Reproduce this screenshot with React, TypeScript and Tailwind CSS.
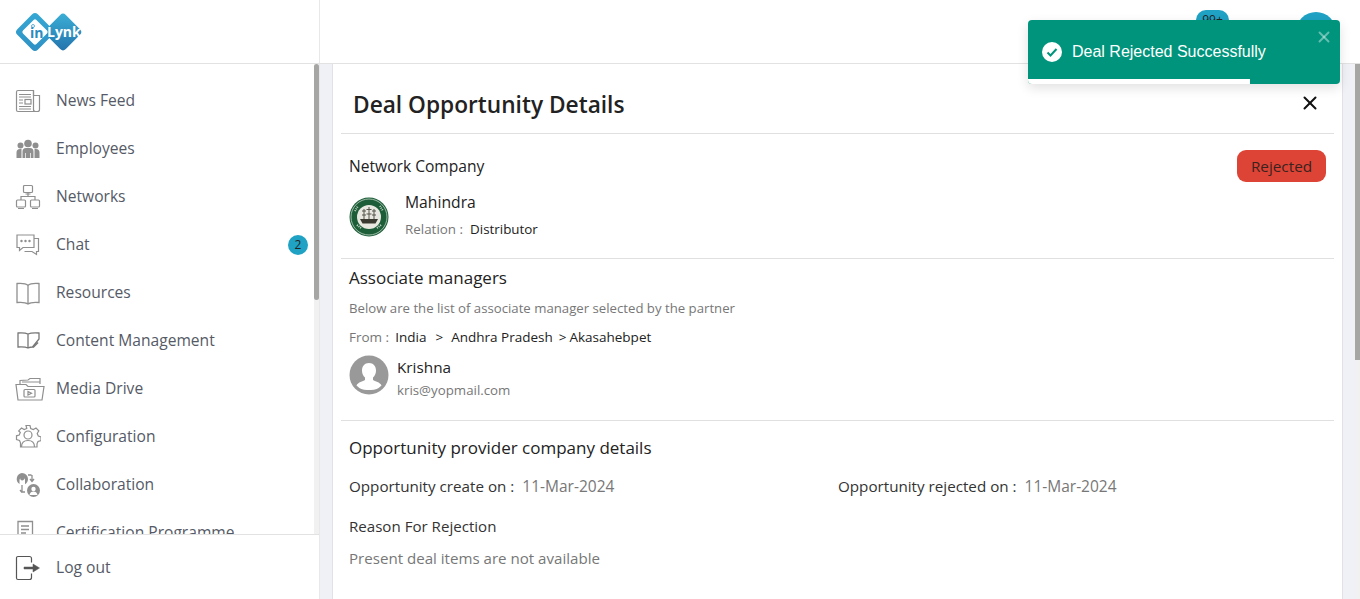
import { X } from 'lucide-react';
import type { ReactNode } from 'react';

const iconClass = 'w-[26px] h-[26px] shrink-0';

const icons: Record<string, ReactNode> = {
  news: (
    <svg viewBox="0 0 26 26" className={iconClass} fill="none" stroke="#8f8f8f" strokeWidth="1.2">
      <path d="M18.5 2.5H3a1.5 1.5 0 0 0-1.5 1.5v18A1.5 1.5 0 0 0 3 23.500h19.500a2 2 0 0 0 2-2V7.500h-6z" />
      <path d="M18.500 2.500v19a2 2 0 0 0 2 2" />
      <path d="M4 6.500h12M4 9h12M4 12h4M4 15h4M4 18.500h12M4 21h12" />
      <rect x="10" y="11.500" width="6" height="4.500" />
    </svg>
  ),
  employees: (
    <svg viewBox="0 0 26 26" className={iconClass} fill="#8f8f8f">
      <circle cx="13" cy="7.500" r="3.800" />
      <circle cx="5.500" cy="9.500" r="3" />
      <circle cx="20.500" cy="9.500" r="3" />
      <path d="M1.500 22v-5.500a3.500 3.500 0 0 1 3.500-3.500h1.500v9zM7.500 22v-6.500a3.500 3.500 0 0 1 3.500-3.500h4a3.500 3.500 0 0 1 3.500 3.500V22h-2.800v-5h-.7v5h-4v-5h-.7v5zM19.500 22v-9H21a3.500 3.500 0 0 1 3.500 3.500V22z" />
    </svg>
  ),
  networks: (
    <svg viewBox="0 0 26 26" className={iconClass} fill="none" stroke="#8f8f8f" strokeWidth="1.200">
      <rect x="8.500" y="1.500" width="9" height="7" rx="1" />
      <rect x="1.500" y="16" width="9" height="7" rx="1" />
      <rect x="15.500" y="16" width="9" height="7" rx="1" />
      <path d="M13 8.500v4M6 16v-3.500h14V16M3 24.500h6M17 24.500h6M10.500 10h5" />
    </svg>
  ),
  chat: (
    <svg viewBox="0 0 26 26" className={iconClass} fill="none" stroke="#8f8f8f" strokeWidth="1.200">
      <path d="M2 3h17v12.500H8L4.500 18.500v-3H2z" />
      <path d="M19 6.500h4.500v13h-2v3l-4.500-3H9.500" />
      <circle cx="6.500" cy="9" r=".6" fill="#8f8f8f" />
      <circle cx="10.500" cy="9" r=".6" fill="#8f8f8f" />
      <circle cx="14.500" cy="9" r=".6" fill="#8f8f8f" />
    </svg>
  ),
  resources: (
    <svg viewBox="0 0 26 26" className={iconClass} fill="none" stroke="#8f8f8f" strokeWidth="1.300">
      <path d="M13 5.500C11 3.500 8 3 2 3.500v19c6-.5 9 0 11 1.500 2-1.500 5-2 11-1.500v-19c-6-.5-9 0-11 2zM13 5.500V24" />
    </svg>
  ),
  content: (
    <svg viewBox="0 0 26 26" className={iconClass} fill="none" stroke="#777" strokeWidth="1.300">
      <path d="M13 6c-2-1-5-1.300-10-1v14c5-.3 8 0 10 1 2-1 3-1 4.500-1L24 11V5c-5-.3-9 0-11 1zM13 6v14" />
      <path d="M18 19.500l5-5" strokeWidth="1.600" />
    </svg>
  ),
  media: (
    <svg viewBox="0 0 30 26" className="w-[30px] h-[26px] shrink-0 -mr-1" fill="none" stroke="#8f8f8f" strokeWidth="1.200">
      <path d="M5 8V4.500l8-.5 2-1.500h10V8M7 6h18" />
      <path d="M1 8.500h10l2 2h16l-2 13.500H3z" />
      <rect x="9" y="13.500" width="11" height="7.500" rx="1" />
      <path d="M13 15.500l3.500 1.700-3.500 1.800z" />
    </svg>
  ),
  config: (
    <svg viewBox="0 0 26 26" className={iconClass} fill="none" stroke="#8f8f8f" strokeWidth="1.200">
      <path d="M11 1.500h4l.7 3 2.600 1.100 2.700-1.500 2.800 2.800-1.600 2.600 1.100 2.500 2.700.8v3.800l-3 .8-1 2.400V23H5.500v-4.200l-1-2.400-3-.8v-3.800l2.700-.8 1.100-2.500L3.700 6.900l2.800-2.800 2.700 1.500 2.600-1.100z" />
      <circle cx="13" cy="11" r="4" />
      <path d="M6.500 23c0-4.500 3-6.500 6.500-6.500s6.500 2 6.500 6.500" />
    </svg>
  ),
  collab: (
    <svg viewBox="0 0 26 26" className={iconClass} fill="#8f8f8f">
      <path d="M7 1a6 6 0 0 1 6 6 6 6 0 0 1-3 5.200V8.500a2.500 2.500 0 1 0-5.500 0V12A6 6 0 0 1 7 1z" />
      <circle cx="7.200" cy="6.500" r="2" />
      <path d="M18.500 12a6.500 6.500 0 0 1 6.500 6.500 6.500 6.500 0 0 1-13 0 6.500 6.500 0 0 1 6.500-6.500z" />
      <circle cx="18.500" cy="17" r="2.200" fill="#fff" />
      <path d="M14.500 23c.5-2.500 2-3.500 4-3.500s3.500 1 4 3.500z" fill="#fff" />
      <path d="M7 13v7h3M5 18l2 2.500M16.500 3H13M17 3v6M15 7l2 2.500 2-2.500" fill="none" stroke="#8f8f8f" strokeWidth="1.300" />
    </svg>
  ),
  cert: (
    <svg viewBox="0 0 26 26" className={iconClass} fill="none" stroke="#8f8f8f" strokeWidth="1.300">
      <path d="M17.500 14V1.500H3v21h10" />
      <path d="M6 6h8M6 9.500h8M6 13h5" />
      <circle cx="18" cy="19" r="4" />
    </svg>
  ),
};

const navItems = [
  { key: 'news', label: 'News Feed' },
  { key: 'employees', label: 'Employees' },
  { key: 'networks', label: 'Networks' },
  { key: 'chat', label: 'Chat', badge: '2' },
  { key: 'resources', label: 'Resources' },
  { key: 'content', label: 'Content Management' },
  { key: 'media', label: 'Media Drive' },
  { key: 'config', label: 'Configuration' },
  { key: 'collab', label: 'Collaboration' },
  { key: 'cert', label: 'Certification Programme' },
];

function Logo() {
  return (
    <svg viewBox="0 0 70 40" className="w-[70px] h-[40px]">
      <defs>
        <linearGradient id="logoLeft" x1="0" y1="0" x2="1" y2="1">
          <stop offset="0" stopColor="#35a9d4" />
          <stop offset="1" stopColor="#2f8fc4" />
        </linearGradient>
        <linearGradient id="logoRight" x1="0" y1="0" x2="1" y2="1">
          <stop offset="0" stopColor="#3cb0d6" />
          <stop offset="1" stopColor="#2272ac" />
        </linearGradient>
      </defs>
      <rect x="5.500" y="5.500" width="29" height="29" rx="4" transform="rotate(45 20 20)" fill="url(#logoLeft)" />
      <rect x="34" y="6" width="28" height="28" rx="4" transform="rotate(45 48 20)" fill="url(#logoRight)" />
      <rect x="10.500" y="10.500" width="19" height="19" rx="2" transform="rotate(45 20 20)" fill="#fff" />
      <circle cx="18" cy="14" r="1.500" fill="none" stroke="#3a9fcb" strokeWidth=".8" />
      <text x="15" y="25.500" fontFamily="'Open Sans', sans-serif" fontWeight="700" fontSize="14" fill="#2b8cc0">in</text>
      <text x="32" y="25" fontFamily="'Open Sans', sans-serif" fontWeight="700" fontSize="14" fill="#fff">Lynk</text>
    </svg>
  );
}

function CompanySeal() {
  return (
    <svg viewBox="0 0 40 40" className="w-[40px] h-[40px] shrink-0">
      <circle cx="20" cy="20" r="19.500" fill="#1d5e38" />
      <circle cx="20" cy="20" r="18" fill="none" stroke="#d8e4da" strokeWidth=".7" />
      <circle cx="20" cy="20" r="12" fill="#e8e8e0" />
      <path d="M11 22h18l-2.500 4.500h-13z" fill="#3a3a30" />
      <path d="M15 22V12M20 22V10M25 22V12M13 14h4M17.500 12.500h5M23 14h4M13 18h4M17.500 17h5M23 18h4" stroke="#55554a" strokeWidth="1" />
      <path d="M6 14l3-5M31 9l3 5M8 28l4 3M28 31l4-3" stroke="#cfdcd2" strokeWidth="2" strokeDasharray="1 1" />
    </svg>
  );
}

function Avatar() {
  return (
    <svg viewBox="0 0 40 40" className="w-[40px] h-[40px] shrink-0">
      <circle cx="20" cy="20" r="19.500" fill="#999999" />
      <path d="M20 8c4.500 0 7 3.200 7 7.500 0 3-1.200 5.500-3 7v2.500c2 1.500 7 2 8.500 5.500A15 15 0 0 1 20 35a15 15 0 0 1-12.500-4.500C9 27 14 26.500 16 25v-2.500c-1.800-1.500-3-4-3-7C13 11.200 15.500 8 20 8z" fill="#fff" />
    </svg>
  );
}

export default function App() {
  return (
    <div className="relative h-[599px] w-[1360px] overflow-hidden bg-[#f0f1f6] font-['Open_Sans',sans-serif]">
      <header className="flex h-[64px] border-b border-[#e2e2e2] bg-white">
        <div className="flex w-[320px] items-center border-r border-[#e8e8e8] pl-[15px]">
          <Logo />
        </div>
        <div className="relative flex-1">
          <span className="absolute left-[876px] top-[10px] flex h-[20px] w-[33px] justify-center rounded-[10px] bg-[#1fa2c4] text-[12px] leading-[20px] text-[#222]">
            99+
          </span>
          <span className="absolute left-[976px] top-[12px] h-[40px] w-[40px] rounded-full bg-[#1fa2c4]" />
        </div>
      </header>

      <div className="flex h-[535px]">
        <aside className="flex w-[320px] shrink-0 flex-col border-r border-[#e8e8e8] bg-white">
          <div className="relative h-[470px] shrink-0 overflow-hidden pt-[13px]">
            {navItems.map((item) => (
              <div key={item.key} className="flex h-[48px] items-center pl-[15px] pr-[12px]">
                {icons[item.key]}
                <span className="ml-[15px] text-[15.6px] font-medium text-[#555a66]">{item.label}</span>
                {item.badge && (
                  <span className="ml-auto mr-[-1px] flex h-[20px] w-[20px] items-center justify-center rounded-full bg-[#1fa2c4] text-[12px] text-[#222]">
                    {item.badge}
                  </span>
                )}
              </div>
            ))}
            <div className="absolute right-0 top-0 h-full w-[5px] bg-[#f1f1f1]">
              <div className="h-[236px] w-full rounded-[3px] bg-[#a6a6a4]" />
            </div>
          </div>
          <div className="flex h-[65px] items-center border-t border-[#e2e2e2] pl-[15px] pt-[2px]">
            <svg viewBox="0 0 26 26" className={iconClass} fill="none" stroke="#555" strokeWidth="1.200">
              <path d="M16.500 7.500V3.500a2 2 0 0 0-2-2H3a1.500 1.500 0 0 0-1.500 1.500v20A1.500 1.500 0 0 0 3 24.500h11.500a2 2 0 0 0 2-2v-4" />
              <path d="M9 12h9V9l6.500 4-6.500 4v-3H9z" fill="#555" strokeWidth=".5" />
            </svg>
            <span className="ml-[15px] text-[15.6px] font-medium text-[#555a66]">Log out</span>
          </div>
        </aside>

        <main className="ml-[12px] w-[1011px] border-x border-[#e2e2e6] bg-white px-[8px]">
          <div className="flex h-[70px] items-center justify-between border-b border-[#e0e0e0] pl-[12px] pr-[13px] pt-[13px]">
            <h1 className="text-[22.7px] font-semibold leading-none text-[#222]">Deal Opportunity Details</h1>
            <X className="-mt-[4px] h-[22px] w-[22px] text-[#111]" strokeWidth={2.200} />
          </div>

          <section className="relative h-[125px] border-b border-[#e0e0e0] px-[8px] pt-[21px]">
            <h2 className="text-[15.6px] font-medium leading-[22px] text-[#222]">Network Company</h2>
            <span className="absolute right-[8px] top-[16px] flex h-[32px] w-[89px] items-center justify-center rounded-[9px] bg-[#de4435] text-[15.3px] text-[#3a2220]">
              Rejected
            </span>
            <div className="mt-[13px] flex gap-[16px]">
              <div className="pt-[7px]">
                <CompanySeal />
              </div>
              <div>
                <div className="text-[15.7px] font-medium leading-[24px] text-[#222]">Mahindra</div>
                <div className="mt-[5px] text-[13.4px] leading-[20px] text-[#777]">
                  Relation :<span className="ml-[7px] font-medium text-[#222]">Distributor</span>
                </div>
              </div>
            </div>
          </section>

          <section className="h-[162px] border-b border-[#e0e0e0] px-[8px] pt-[6px]">
            <h2 className="text-[17px] font-medium leading-[26px] text-[#222]">Associate managers</h2>
            <p className="mt-[7px] text-[13.2px] leading-[20px] text-[#777]">Below are the list of associate manager selected by the partner</p>
            <p className="mt-[9px] text-[13.5px] leading-[20px] text-[#777]">
              From :
              <span className="ml-[6px] font-medium text-[#222]">
                India
                <span className="ml-[9px]">&gt;</span>
                <span className="ml-[8px]">Andhra Pradesh</span>
                <span className="ml-[6px]">&gt;</span>
                <span className="ml-[3px]">Akasahebpet</span>
              </span>
            </p>
            <div className="mt-[3px] flex gap-[8px]">
              <div className="pt-[5px]">
                <Avatar />
              </div>
              <div className="pt-[5px]">
                <div className="text-[15.3px] font-medium leading-[24px] text-[#222]">Krishna</div>
                <div className="mt-[1px] text-[13.3px] leading-[20px] text-[#777]">kris@yopmail.com</div>
              </div>
            </div>
          </section>

          <section className="px-[8px] pt-[14px]">
            <h2 className="text-[17px] font-medium leading-[26px] text-[#222]">Opportunity provider company details</h2>
            <div className="mt-[13px] flex text-[15.2px] leading-[24px] text-[#333]">
              <div className="w-[489px]">
                Opportunity create on :<span className="ml-[8px] text-[15.5px] text-[#777]">11-Mar-2024</span>
              </div>
              <div>
                Opportunity rejected on :<span className="ml-[8px] text-[15.5px] text-[#777]">11-Mar-2024</span>
              </div>
            </div>
            <div className="mt-[16px] text-[15.1px] leading-[24px] text-[#333]">Reason For Rejection</div>
            <div className="mt-[8px] text-[15.1px] leading-[24px] text-[#777]">Present deal items are not available</div>
          </section>
        </main>

        <div className="ml-auto w-[5px] bg-[#f1f1f1]">
          <div className="h-[296px] w-full bg-[#a6a6a4]" />
        </div>
      </div>

      <div className="absolute left-[1028px] top-[20px] h-[64px] w-[312px] overflow-hidden rounded-[4px] bg-[#00947c] shadow-[0_4px_12px_rgba(0,0,0,0.12)]">
        <div className="flex h-[59px] items-center pl-[14px]">
          <svg viewBox="0 0 20 20" className="mt-[5px] h-[20px] w-[20px]">
            <circle cx="10" cy="10" r="10" fill="#fff" />
            <path d="M5.500 10.500l3 3 6-6.500" fill="none" stroke="#00947c" strokeWidth="2" />
          </svg>
          <span className="ml-[10px] mt-[5px] font-['Liberation_Sans',sans-serif] text-[16px] text-white">Deal Rejected Successfully</span>
        </div>
        <X className="absolute right-[7px] top-[8px] h-[18px] w-[18px] text-white/40" strokeWidth={2.500} />
        <div className="absolute bottom-0 left-0 h-[5px] w-[222px] bg-white" />
      </div>
    </div>
  );
}
